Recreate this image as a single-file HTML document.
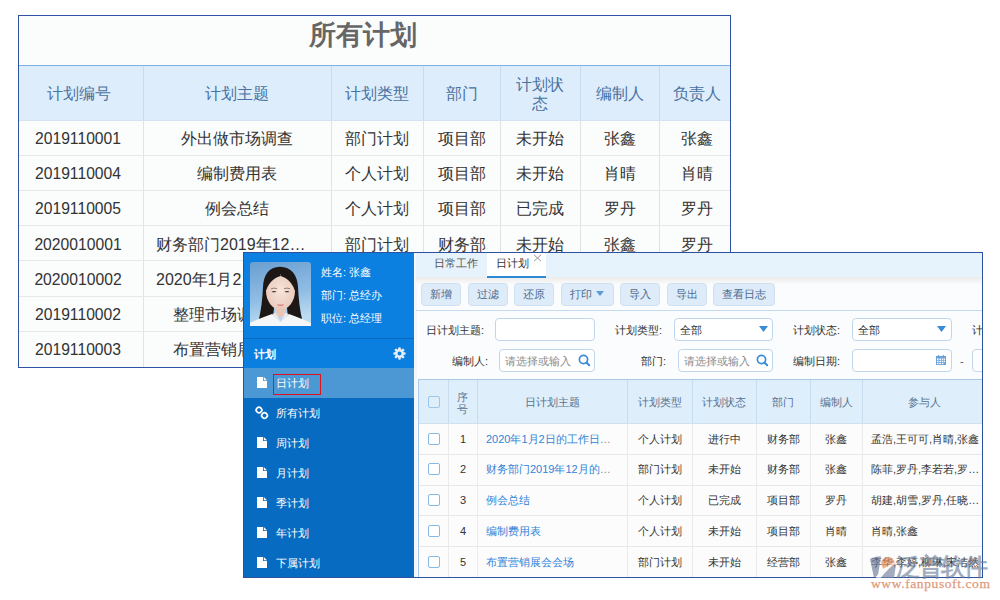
<!DOCTYPE html>
<html><head><meta charset="utf-8">
<style>
*{box-sizing:border-box;margin:0;padding:0}
html,body{width:1000px;height:600px;overflow:hidden;background:#fff;font-family:"Liberation Sans",sans-serif}
.a{position:absolute}
#bt{left:18px;top:15px;width:713px;height:353px;border:1.5px solid #3052a5;background:#fbfcfc}
.hd{background:#deedfb;color:#50709a}
.c{position:absolute;text-align:center;white-space:nowrap;line-height:20px}
.bx{font-size:16px;color:#333}
.vl{position:absolute;width:1px;background:#e2e2e2}
.hl{position:absolute;height:1px;background:#e8e8e8}

.t{position:absolute;white-space:nowrap;font-size:11px;line-height:14px}
.btn{position:absolute;top:283px;height:23px;background:#deecf9;border:1px solid #cfe0f0;border-radius:4px;color:#4a6a8e;font-size:11px;line-height:21px;text-align:center}
.inp{position:absolute;height:23px;background:#fff;border:1px solid #c0d6ec;border-radius:4px}
.lbl{position:absolute;white-space:nowrap;font-size:11px;line-height:14px;color:#333}
.gh{position:absolute;font-size:11px;line-height:14px;color:#56728f;text-align:center;white-space:nowrap}
.gd{position:absolute;font-size:11px;line-height:14px;color:#333;text-align:center;white-space:nowrap}
.gl{position:absolute;font-size:11px;line-height:14px;color:#2f84d8;white-space:nowrap}
.cb{position:absolute;left:428px;width:12px;height:12px;border:1px solid #86b9e6;border-radius:2px;background:#fff}
.mi{position:absolute;left:276px;font-size:11px;line-height:14px;color:#fff;white-space:nowrap}
.fi{position:absolute;left:257px}
</style></head><body>
<div id="bt" class="a"></div>
<div class="a" style="left:19px;top:65px;width:711px;height:1px;background:#7db2e2"></div>
<div class="a hd" style="left:19px;top:66px;width:711px;height:54px"></div>
<div class="a" style="left:19px;top:120px;width:711px;height:1px;background:#d5e3f0"></div>
<div class="a" style="left:308px;top:20px;width:110px;font-size:27px;font-weight:bold;color:#666;line-height:30px;text-align:center">所有计划</div>
<div class="vl" style="left:143px;top:66px;height:54px;background:#c8dcee"></div>
<div class="vl" style="left:143px;top:121px;height:246px"></div>
<div class="vl" style="left:331px;top:66px;height:54px;background:#c8dcee"></div>
<div class="vl" style="left:331px;top:121px;height:246px"></div>
<div class="vl" style="left:423px;top:66px;height:54px;background:#c8dcee"></div>
<div class="vl" style="left:423px;top:121px;height:246px"></div>
<div class="vl" style="left:500px;top:66px;height:54px;background:#c8dcee"></div>
<div class="vl" style="left:500px;top:121px;height:246px"></div>
<div class="vl" style="left:580px;top:66px;height:54px;background:#c8dcee"></div>
<div class="vl" style="left:580px;top:121px;height:246px"></div>
<div class="vl" style="left:659px;top:66px;height:54px;background:#c8dcee"></div>
<div class="vl" style="left:659px;top:121px;height:246px"></div>
<div class="hl" style="left:19px;top:155px;width:711px"></div>
<div class="hl" style="left:19px;top:190px;width:711px"></div>
<div class="hl" style="left:19px;top:225px;width:711px"></div>
<div class="hl" style="left:19px;top:260px;width:711px"></div>
<div class="hl" style="left:19px;top:296px;width:711px"></div>
<div class="hl" style="left:19px;top:331px;width:711px"></div>
<div class="c" style="left:16px;top:84.3px;width:125px;font-size:16px;color:#4872a2">计划编号</div>
<div class="c" style="left:143px;top:84.3px;width:188px;font-size:16px;color:#4872a2">计划主题</div>
<div class="c" style="left:331px;top:84.3px;width:92px;font-size:16px;color:#4872a2">计划类型</div>
<div class="c" style="left:423px;top:84.3px;width:77px;font-size:16px;color:#4872a2">部门</div>
<div class="c" style="left:500px;top:75px;width:80px;font-size:16px;color:#4872a2;line-height:19px;letter-spacing:0.3px">计划状<br>态</div>
<div class="c" style="left:580px;top:84.3px;width:79px;font-size:16px;color:#4872a2">编制人</div>
<div class="c" style="left:660.5px;top:84.3px;width:72px;font-size:16px;color:#4872a2">负责人</div>
<div class="c bx" style="left:15.5px;top:128.5px;width:125px;font-size:15.7px">2019110001</div>
<div class="c bx" style="left:143px;top:128.5px;width:188px">外出做市场调查</div>
<div class="c bx" style="left:331px;top:128.5px;width:92px">部门计划</div>
<div class="c bx" style="left:423px;top:128.5px;width:77px">项目部</div>
<div class="c bx" style="left:500px;top:128.5px;width:80px">未开始</div>
<div class="c bx" style="left:580px;top:128.5px;width:79px">张鑫</div>
<div class="c bx" style="left:661px;top:128.5px;width:72px">张鑫</div>
<div class="c bx" style="left:15.5px;top:163.8px;width:125px;font-size:15.7px">2019110004</div>
<div class="c bx" style="left:143px;top:163.8px;width:188px">编制费用表</div>
<div class="c bx" style="left:331px;top:163.8px;width:92px">个人计划</div>
<div class="c bx" style="left:423px;top:163.8px;width:77px">项目部</div>
<div class="c bx" style="left:500px;top:163.8px;width:80px">未开始</div>
<div class="c bx" style="left:580px;top:163.8px;width:79px">肖晴</div>
<div class="c bx" style="left:661px;top:163.8px;width:72px">肖晴</div>
<div class="c bx" style="left:15.5px;top:199.3px;width:125px;font-size:15.7px">2019110005</div>
<div class="c bx" style="left:143px;top:199.3px;width:188px">例会总结</div>
<div class="c bx" style="left:331px;top:199.3px;width:92px">个人计划</div>
<div class="c bx" style="left:423px;top:199.3px;width:77px">项目部</div>
<div class="c bx" style="left:500px;top:199.3px;width:80px">已完成</div>
<div class="c bx" style="left:580px;top:199.3px;width:79px">罗丹</div>
<div class="c bx" style="left:661px;top:199.3px;width:72px">罗丹</div>
<div class="c bx" style="left:15.5px;top:234.9px;width:125px;font-size:15.7px">2020010001</div>
<div class="c bx" style="left:156px;top:234.9px;width:170px;text-align:left">财务部门2019年12…</div>
<div class="c bx" style="left:331px;top:234.9px;width:92px">部门计划</div>
<div class="c bx" style="left:423px;top:234.9px;width:77px">财务部</div>
<div class="c bx" style="left:500px;top:234.9px;width:80px">未开始</div>
<div class="c bx" style="left:580px;top:234.9px;width:79px">张鑫</div>
<div class="c bx" style="left:661px;top:234.9px;width:72px">罗丹</div>
<div class="c bx" style="left:15.5px;top:270.2px;width:125px;font-size:15.7px">2020010002</div>
<div class="c bx" style="left:156px;top:270.2px;width:170px;text-align:left">2020年1月2日的工作日志</div>
<div class="c bx" style="left:331px;top:270.2px;width:92px">个人计划</div>
<div class="c bx" style="left:423px;top:270.2px;width:77px">财务部</div>
<div class="c bx" style="left:500px;top:270.2px;width:80px">进行中</div>
<div class="c bx" style="left:580px;top:270.2px;width:79px">张鑫</div>
<div class="c bx" style="left:661px;top:270.2px;width:72px">张鑫</div>
<div class="c bx" style="left:15.5px;top:304.8px;width:125px;font-size:15.7px">2019110002</div>
<div class="c bx" style="left:143px;top:304.8px;width:188px">整理市场调研资料</div>
<div class="c bx" style="left:331px;top:304.8px;width:92px">部门计划</div>
<div class="c bx" style="left:423px;top:304.8px;width:77px">项目部</div>
<div class="c bx" style="left:500px;top:304.8px;width:80px">未开始</div>
<div class="c bx" style="left:580px;top:304.8px;width:79px">张鑫</div>
<div class="c bx" style="left:661px;top:304.8px;width:72px">张鑫</div>
<div class="c bx" style="left:15.5px;top:340px;width:125px;font-size:15.7px">2019110003</div>
<div class="c bx" style="left:143px;top:340px;width:188px">布置营销展会会场</div>
<div class="c bx" style="left:331px;top:340px;width:92px">部门计划</div>
<div class="c bx" style="left:423px;top:340px;width:77px">经营部</div>
<div class="c bx" style="left:500px;top:340px;width:80px">未开始</div>
<div class="c bx" style="left:580px;top:340px;width:79px">张鑫</div>
<div class="c bx" style="left:661px;top:340px;width:72px">张鑫</div>
<div class="a" style="left:243px;top:252px;width:740px;height:326px;background:#fbfcfd;border:1px solid #2c51a0"></div>
<div class="a" style="left:243px;top:252px;width:171px;height:326px;background:#076cc1;border-left:1px solid #2c51a0;border-bottom:1px solid #2c51a0;border-top:1px solid #2c51a0"></div>
<div class="a" style="left:244px;top:253px;width:170px;height:85px;background:#0b80e0"></div>
<div class="a" style="left:244px;top:338.5px;width:170px;height:1px;background:#0a64ba"></div>
<div class="a" style="left:244px;top:339px;width:170px;height:29px;background:#0a7fe0"></div>
<div class="a" style="left:244px;top:368px;width:170px;height:30px;background:#4b98d4"></div>
<svg class="a" style="left:250px;top:262px" width="61" height="64" viewBox="0 0 61 64">
<defs><linearGradient id="pg" x1="0" y1="0" x2="0.2" y2="1"><stop offset="0" stop-color="#6a9fd0"/><stop offset="0.6" stop-color="#90bde5"/><stop offset="1" stop-color="#bcdcf2"/></linearGradient>
<radialGradient id="fg" cx="0.5" cy="0.45" r="0.6"><stop offset="0" stop-color="#f7e3da"/><stop offset="1" stop-color="#e9c8b9"/></radialGradient></defs>
<rect width="61" height="64" rx="3" fill="url(#pg)"/>
<path d="M30 4.8 C19 4.8 13.5 13 13 25 C12.5 37 11 48 9 57 C14 58 19 57.5 23 56 L24 46 L37 46 L38 56 C42 57.5 47 58 52 57 C50 48 48.5 37 48 25 C47.5 13 41 4.8 30 4.8Z" fill="#1d1715"/>
<path d="M30.5 12 C20.5 12 16 20 16 29 C16 39 22.5 47.5 30.5 48.5 C38.5 47.5 45 39 45 29 C45 20 40.5 12 30.5 12Z" fill="url(#fg)"/>
<path d="M30.3 9 C22 10 15.5 17 15 32 C17.5 22 23 16 30.5 14Z" fill="#1d1715"/>
<path d="M30.7 9 C39 10 45.5 17 46 32 C43.5 22 38 16 30.5 14Z" fill="#1d1715"/>
<path d="M25.5 45 L35.5 45 L36.5 55 L24.5 55Z" fill="#e9c7b8"/>
<path d="M21.5 29.7 Q24 28.3 26.5 29.7 Q24 30.7 21.5 29.7Z" fill="#3d2e2a"/>
<path d="M34.5 29.7 Q37 28.3 39.5 29.7 Q37 30.7 34.5 29.7Z" fill="#3d2e2a"/>
<path d="M21 26.8 Q24 25.5 27 26.6" stroke="#6a5650" stroke-width="0.7" fill="none"/>
<path d="M34 26.6 Q37 25.5 40 26.8" stroke="#6a5650" stroke-width="0.7" fill="none"/>
<path d="M27.5 42.8 Q30.5 44.3 33.5 42.8 Q30.5 43.3 27.5 42.8Z" stroke="#dc8585" stroke-width="1.2" fill="#e08a8a"/>
<path d="M0 64 L0 61 C6 58 14 55 22 52 L30.5 60 L39 52 C47 55 55 58 61 61 L61 64Z" fill="#f5f6f8"/>
<path d="M22 52 L26 51 L30.5 60Z M39 52 L35 51 L30.5 60Z" fill="#e6e9ee"/>
</svg>
<div class="t" style="left:321px;top:264.7px;color:#fff;font-size:10.8px">姓名: 张鑫</div>
<div class="t" style="left:321px;top:287.6px;color:#fff;font-size:10.8px">部门: 总经办</div>
<div class="t" style="left:321px;top:311px;color:#fff;font-size:10.8px">职位: 总经理</div>
<div class="t" style="left:254px;top:346.5px;color:#fff;font-weight:bold">计划</div>
<svg class="a" style="left:392.5px;top:347px" width="13" height="13" viewBox="0 0 13 13"><g fill="#e4eef9"><circle cx="6.5" cy="6.5" r="4.4"/>
<rect x="5.2" y="0.3" width="2.6" height="12.4" rx="1"/><rect x="5.2" y="0.3" width="2.6" height="12.4" rx="1" transform="rotate(45 6.5 6.5)"/><rect x="5.2" y="0.3" width="2.6" height="12.4" rx="1" transform="rotate(90 6.5 6.5)"/><rect x="5.2" y="0.3" width="2.6" height="12.4" rx="1" transform="rotate(135 6.5 6.5)"/></g><circle cx="6.5" cy="6.5" r="1.9" fill="#0a7fe0"/></svg>
<div class="mi" style="top:376px">日计划</div>
<svg class="fi" style="top:376.5px" width="10" height="11" viewBox="0 0 10 11"><path d="M0 0H6V4H10V11H0Z M6.8 0L10 3.2H6.8Z" fill="#fff"/></svg>
<div class="mi" style="top:406px">所有计划</div>
<svg class="a" style="left:254px;top:406px" width="15" height="15" viewBox="0 0 15 15"><g fill="none" stroke="#fff" stroke-width="1.7"><rect x="2.3" y="1.3" width="5.4" height="5.4" rx="2.4" transform="rotate(45 5 4)"/><rect x="7.8" y="6.8" width="5.4" height="5.4" rx="2.4" transform="rotate(45 10.5 9.5)"/></g></svg>
<div class="mi" style="top:436px">周计划</div>
<svg class="fi" style="top:436.5px" width="10" height="11" viewBox="0 0 10 11"><path d="M0 0H6V4H10V11H0Z M6.8 0L10 3.2H6.8Z" fill="#fff"/></svg>
<div class="mi" style="top:466px">月计划</div>
<svg class="fi" style="top:466.5px" width="10" height="11" viewBox="0 0 10 11"><path d="M0 0H6V4H10V11H0Z M6.8 0L10 3.2H6.8Z" fill="#fff"/></svg>
<div class="mi" style="top:496px">季计划</div>
<svg class="fi" style="top:496.5px" width="10" height="11" viewBox="0 0 10 11"><path d="M0 0H6V4H10V11H0Z M6.8 0L10 3.2H6.8Z" fill="#fff"/></svg>
<div class="mi" style="top:526px">年计划</div>
<svg class="fi" style="top:526.5px" width="10" height="11" viewBox="0 0 10 11"><path d="M0 0H6V4H10V11H0Z M6.8 0L10 3.2H6.8Z" fill="#fff"/></svg>
<div class="mi" style="top:556px">下属计划</div>
<svg class="fi" style="top:556.5px" width="10" height="11" viewBox="0 0 10 11"><path d="M0 0H6V4H10V11H0Z M6.8 0L10 3.2H6.8Z" fill="#fff"/></svg>
<div class="a" style="left:273px;top:374px;width:48px;height:21px;border:1.5px solid #e0121c"></div>
<div class="a" style="left:414px;top:253px;width:3px;height:324px;background:#f3f6fa"></div>
<div class="a" style="left:416px;top:253px;width:566px;height:24px;background:#e6f2fc"></div>
<div class="a" style="left:416px;top:277px;width:566px;height:7px;background:linear-gradient(#ebebeb,#fafafa)"></div>
<div class="a" style="left:487px;top:253px;width:59px;height:25px;background:#fff;border-bottom:2px solid #2f88d4"></div>
<div class="t" style="left:434px;top:256px;color:#555">日常工作</div>
<div class="t" style="left:496px;top:256px;color:#333">日计划</div>
<svg class="a" style="left:533px;top:253.5px" width="9" height="8" viewBox="0 0 9 8"><path d="M1 0.8L8 7.2M8 0.8L1 7.2" stroke="#8a8a8a" stroke-width="0.9"/></svg>
<div class="btn" style="left:421px;width:40px">新增</div>
<div class="btn" style="left:468px;width:40px">过滤</div>
<div class="btn" style="left:514px;width:40px">还原</div>
<div class="btn" style="left:561px;width:53px;text-align:left;padding-left:8px">打印<svg style="position:absolute;left:34px;top:7px" width="8" height="5" viewBox="0 0 8 5"><path d="M0 0H8L4 5Z" fill="#5b9bd8"/></svg></div>
<div class="btn" style="left:620px;width:40px">导入</div>
<div class="btn" style="left:667px;width:40px">导出</div>
<div class="btn" style="left:713px;width:62px">查看日志</div>
<div class="a" style="left:416px;top:310px;width:566px;height:1px;background:#c6dbef"></div>
<div class="lbl" style="left:426px;top:322.5px">日计划主题:</div>
<div class="inp" style="left:495px;top:318px;width:100px"></div>
<div class="lbl" style="left:615px;top:322.5px">计划类型:</div>
<div class="inp" style="left:674px;top:318px;width:99px"></div>
<div class="lbl" style="left:680px;top:322.5px">全部</div>
<svg class="a" style="left:759px;top:326px" width="9" height="6" viewBox="0 0 9 6"><path d="M0 0H9L4.5 6Z" fill="#3a8ad6"/></svg>
<div class="lbl" style="left:793px;top:322.5px">计划状态:</div>
<div class="inp" style="left:852px;top:318px;width:100px"></div>
<div class="lbl" style="left:858px;top:322.5px">全部</div>
<svg class="a" style="left:937px;top:326px" width="9" height="6" viewBox="0 0 9 6"><path d="M0 0H9L4.5 6Z" fill="#3a8ad6"/></svg>
<div class="lbl" style="left:972px;top:322.5px">计</div>
<div class="lbl" style="left:452px;top:354px">编制人:</div>
<div class="inp" style="left:499px;top:349px;width:96px"></div>
<div class="lbl" style="left:505px;top:354px;color:#8a8a8a">请选择或输入</div>
<svg class="a" style="left:578px;top:353.5px" width="13" height="13" viewBox="0 0 13 13"><circle cx="5.5" cy="5.5" r="4.1" fill="none" stroke="#3a8cd8" stroke-width="1.7"/><path d="M8.5 8.5L11.2 11.2" stroke="#3a8cd8" stroke-width="2" stroke-linecap="round"/></svg>
<div class="lbl" style="left:641px;top:354px">部门:</div>
<div class="inp" style="left:678px;top:349px;width:95px"></div>
<div class="lbl" style="left:684px;top:354px;color:#8a8a8a">请选择或输入</div>
<svg class="a" style="left:756px;top:353.5px" width="13" height="13" viewBox="0 0 13 13"><circle cx="5.5" cy="5.5" r="4.1" fill="none" stroke="#3a8cd8" stroke-width="1.7"/><path d="M8.5 8.5L11.2 11.2" stroke="#3a8cd8" stroke-width="2" stroke-linecap="round"/></svg>
<div class="lbl" style="left:793px;top:354px">编制日期:</div>
<div class="inp" style="left:852px;top:349px;width:100px"></div>
<svg class="a" style="left:936px;top:355px" width="10" height="10" viewBox="0 0 10 10"><rect x="0" y="1" width="10" height="9" fill="#6aa3dc"/><rect x="2" y="0" width="1.2" height="2" fill="#6aa3dc"/><rect x="6.8" y="0" width="1.2" height="2" fill="#6aa3dc"/><g fill="#fff"><rect x="1" y="3.5" width="1.6" height="1.4"/><rect x="3.4" y="3.5" width="1.6" height="1.4"/><rect x="5.8" y="3.5" width="1.6" height="1.4"/><rect x="1" y="5.7" width="1.6" height="1.4"/><rect x="3.4" y="5.7" width="1.6" height="1.4"/><rect x="5.8" y="5.7" width="1.6" height="1.4"/><rect x="8" y="3.5" width="1" height="1.4"/><rect x="8" y="5.7" width="1" height="1.4"/><rect x="1" y="7.9" width="1.6" height="1.2"/><rect x="3.4" y="7.9" width="1.6" height="1.2"/><rect x="5.8" y="7.9" width="1.6" height="1.2"/></g></svg>
<div class="lbl" style="left:960px;top:354px;color:#555">-</div>
<div class="inp" style="left:972px;top:349px;width:30px"></div>
<div class="a" style="left:418px;top:379px;width:566px;height:198px;background:#fcfcfc;border-left:1px solid #a6c9ea;border-top:1px solid #a6c9ea"></div>
<div class="a" style="left:419px;top:380px;width:563px;height:44px;background:#dfeefb;border-bottom:1px solid #cfe0ef"></div>
<div class="a" style="left:448px;top:380px;width:1px;height:43px;background:#c9dced"></div>
<div class="a" style="left:448px;top:424px;width:1px;height:153px;background:#ebebeb"></div>
<div class="a" style="left:477px;top:380px;width:1px;height:43px;background:#c9dced"></div>
<div class="a" style="left:477px;top:424px;width:1px;height:153px;background:#ebebeb"></div>
<div class="a" style="left:627px;top:380px;width:1px;height:43px;background:#c9dced"></div>
<div class="a" style="left:627px;top:424px;width:1px;height:153px;background:#ebebeb"></div>
<div class="a" style="left:692px;top:380px;width:1px;height:43px;background:#c9dced"></div>
<div class="a" style="left:692px;top:424px;width:1px;height:153px;background:#ebebeb"></div>
<div class="a" style="left:756px;top:380px;width:1px;height:43px;background:#c9dced"></div>
<div class="a" style="left:756px;top:424px;width:1px;height:153px;background:#ebebeb"></div>
<div class="a" style="left:810px;top:380px;width:1px;height:43px;background:#c9dced"></div>
<div class="a" style="left:810px;top:424px;width:1px;height:153px;background:#ebebeb"></div>
<div class="a" style="left:862px;top:380px;width:1px;height:43px;background:#c9dced"></div>
<div class="a" style="left:862px;top:424px;width:1px;height:153px;background:#ebebeb"></div>
<div class="a" style="left:419px;top:454px;width:563px;height:1px;background:#e8e8e8"></div>
<div class="a" style="left:419px;top:484.5px;width:563px;height:1px;background:#e8e8e8"></div>
<div class="a" style="left:419px;top:515px;width:563px;height:1px;background:#e8e8e8"></div>
<div class="a" style="left:419px;top:546px;width:563px;height:1px;background:#e8e8e8"></div>
<div class="cb" style="top:395.5px;background:transparent;border-color:#9cc6ea"></div>
<div class="gh" style="left:448px;top:390.5px;width:29px;line-height:12px">序<br>号</div>
<div class="gh" style="left:477px;top:394.7px;width:150px">日计划主题</div>
<div class="gh" style="left:627px;top:394.7px;width:65px">计划类型</div>
<div class="gh" style="left:692px;top:394.7px;width:64px">计划状态</div>
<div class="gh" style="left:756px;top:394.7px;width:54px">部门</div>
<div class="gh" style="left:810px;top:394.7px;width:52px">编制人</div>
<div class="gh" style="left:862px;top:394.7px;width:124px">参与人</div>
<div class="cb" style="top:432.5px"></div>
<div class="gd" style="left:448px;top:431.5px;width:30px">1</div>
<div class="gl" style="left:486px;top:431.5px">2020年1月2日的工作日<span style="color:#888;letter-spacing:-0.5px">…</span></div>
<div class="gd" style="left:627px;top:431.5px;width:65px">个人计划</div>
<div class="gd" style="left:692px;top:431.5px;width:64px">进行中</div>
<div class="gd" style="left:756px;top:431.5px;width:54px">财务部</div>
<div class="gd" style="left:810px;top:431.5px;width:52px">张鑫</div>
<div class="gd" style="left:871px;top:431.5px;text-align:left">孟浩,王可可,肖晴,张鑫</div>
<div class="cb" style="top:463.25px"></div>
<div class="gd" style="left:448px;top:462.25px;width:30px">2</div>
<div class="gl" style="left:486px;top:462.25px">财务部门2019年12月的<span style="color:#888;letter-spacing:-0.5px">…</span></div>
<div class="gd" style="left:627px;top:462.25px;width:65px">部门计划</div>
<div class="gd" style="left:692px;top:462.25px;width:64px">未开始</div>
<div class="gd" style="left:756px;top:462.25px;width:54px">财务部</div>
<div class="gd" style="left:810px;top:462.25px;width:52px">张鑫</div>
<div class="gd" style="left:871px;top:462.25px;text-align:left">陈菲,罗丹,李若若,罗…</div>
<div class="cb" style="top:493.75px"></div>
<div class="gd" style="left:448px;top:492.75px;width:30px">3</div>
<div class="gl" style="left:486px;top:492.75px">例会总结</div>
<div class="gd" style="left:627px;top:492.75px;width:65px">个人计划</div>
<div class="gd" style="left:692px;top:492.75px;width:64px">已完成</div>
<div class="gd" style="left:756px;top:492.75px;width:54px">项目部</div>
<div class="gd" style="left:810px;top:492.75px;width:52px">罗丹</div>
<div class="gd" style="left:871px;top:492.75px;text-align:left">胡建,胡雪,罗丹,任晓…</div>
<div class="cb" style="top:524.5px"></div>
<div class="gd" style="left:448px;top:523.5px;width:30px">4</div>
<div class="gl" style="left:486px;top:523.5px">编制费用表</div>
<div class="gd" style="left:627px;top:523.5px;width:65px">个人计划</div>
<div class="gd" style="left:692px;top:523.5px;width:64px">未开始</div>
<div class="gd" style="left:756px;top:523.5px;width:54px">项目部</div>
<div class="gd" style="left:810px;top:523.5px;width:52px">肖晴</div>
<div class="gd" style="left:871px;top:523.5px;text-align:left">肖晴,张鑫</div>
<div class="cb" style="top:555.5px"></div>
<div class="gd" style="left:448px;top:554.5px;width:30px">5</div>
<div class="gl" style="left:486px;top:554.5px">布置营销展会会场</div>
<div class="gd" style="left:627px;top:554.5px;width:65px">部门计划</div>
<div class="gd" style="left:692px;top:554.5px;width:64px">未开始</div>
<div class="gd" style="left:756px;top:554.5px;width:54px">经营部</div>
<div class="gd" style="left:810px;top:554.5px;width:52px">张鑫</div>
<div class="gd" style="left:871px;top:554.5px;text-align:left">李华,李婷,柳琳,宋洁然</div>
<div class="a" style="left:983px;top:252px;width:17px;height:330px;background:#fff"></div>
<div class="a" style="left:982px;top:252px;width:1px;height:326px;background:#2c51a0"></div>
<div class="a" style="left:243px;top:577px;width:740px;height:1px;background:#2c51a0"></div>
<div class="a" style="left:243px;top:252px;width:740px;height:1px;background:#2c51a0"></div>
<svg class="a" style="left:868px;top:553px" width="30" height="26" viewBox="0 0 30 26">
<g opacity="0.68">
<path d="M2 6 C5 4 9 3.5 13 3.5 L10 22 L6 25 Z" fill="#707f9b"/>
<circle cx="20" cy="10.5" r="6.8" fill="#e28d5c"/>
<path d="M8 25 C11 18 18 13 28 9 C22 14 17 19 13 25 Z" fill="#fbfbfb"/>
<path d="M13 25 C16 20 21 15 28 11 L26 25 Z" fill="#7787a3"/>
</g>
</svg>
<div class="a" style="left:896px;top:552.5px;font-size:24px;line-height:28px;color:#6a7c99;opacity:0.62;font-weight:bold;white-space:nowrap;letter-spacing:-1.3px">泛普软件</div>
<div class="a" style="left:871px;top:577px;font-family:'Liberation Serif',serif;font-size:13.5px;line-height:14px;color:#e09a7c;white-space:nowrap;letter-spacing:0.6px;-webkit-text-stroke:0.25px #e09a7c">www.fanpusoft.com</div>
</body></html>
